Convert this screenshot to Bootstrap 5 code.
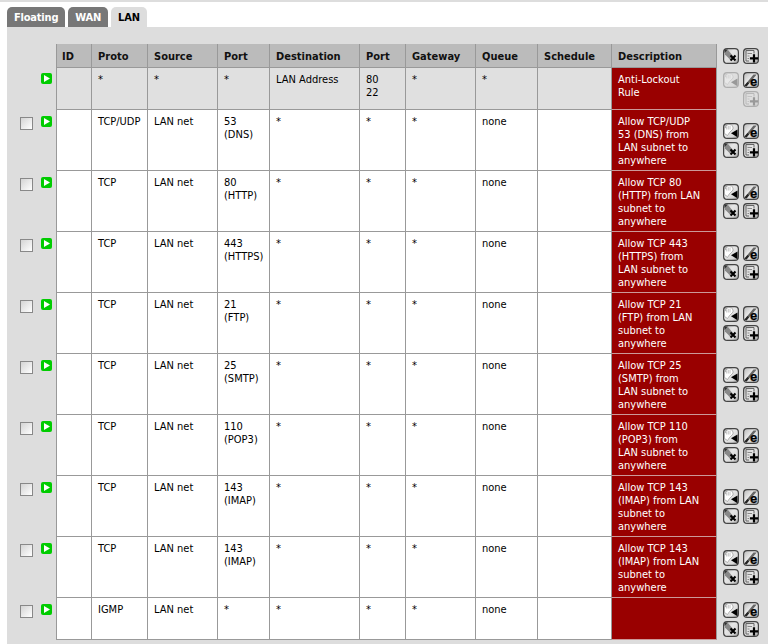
<!DOCTYPE html>
<html lang="en">
<head>
<meta charset="utf-8">
<title>Firewall Rules: LAN</title>
<link rel="stylesheet" href="https://cdn.jsdelivr.net/npm/bootstrap@5.3.0/dist/css/bootstrap.min.css">
<style>
html,body{height:644px;overflow:hidden}
body{background:#fff;border-top:2px solid #ddd;font-family:"DejaVu Sans Condensed","DejaVu Sans",sans-serif;font-size:11px;line-height:13px;color:#000}
.fw-tabs{border:0;padding:5px 0 0 7px;gap:3px;height:25px;--bs-nav-tabs-border-width:0}
.fw-tabs .nav-link{font-weight:700;font-size:11px;line-height:13px;letter-spacing:-.2px;height:20px;padding:4px 7px;border:0;border-radius:5px 5px 0 0;background:#777;color:#fff;margin:0}
.fw-tabs .nav-link.active{background:#ddd;color:#000}
.fw-panel{margin-left:7px;background:#ddd;padding:17px 0 4px;height:617px}
.fw-table{table-layout:fixed;width:761px;margin:0;border-collapse:separate;border-spacing:0;--bs-table-bg:transparent;--bs-table-color:#000}
.fw-table>:not(caption)>*>*{padding:5px 6px 0;border-width:0 1px 1px 0;border-style:solid;border-color:#999;vertical-align:top;box-shadow:none;font-weight:400;background:#fff;color:#000}
.fw-table>thead>tr>th{height:24px;background:#bbb;font-weight:700;padding-top:6px;color:#111}
.fw-table>:not(caption)>*>.id-cell{border-left-width:1px;padding-left:5px}
.fw-table>tbody>tr{height:61px}
.fw-table>tbody>tr.short-row{height:42px}
.fw-table>tbody>tr.locked>td{background:#e0e0e0}
.fw-table>:not(caption)>*>.bare,.fw-table>thead>tr>th.bare,.fw-table>tbody>tr.locked>td.bare{background:transparent;border-width:0;padding:0}
.fw-table>tbody>tr>.descr,.fw-table>tbody>tr.locked>td.descr{background:#900;color:#fff;border-bottom-color:#c99}
.fw-table>tbody>tr>.acts,.fw-table>tbody>tr.locked>td.acts,.fw-table>thead>tr>th.acts{vertical-align:middle;padding:0 0 0 6px}
.fw-table>tbody>tr.short-row>td.acts{padding-top:1px}
.fw-table>tbody>tr>td.cb-cell{padding:7px 0 0 13px}
.cb-box.form-check-input{display:block;width:13px;height:13px;margin:0;border:1px solid #888;border-radius:0;background:linear-gradient(135deg,#d4d4d4,#fff)}
.fw-table>tbody>tr>td.go-cell{padding:6px 0 0 5px}
.fw-table>tbody>tr.locked>td.go-cell{padding:5px 0 0 5px}
.go-ico{display:block;width:11px;height:11px}
.ico-grid{display:grid;grid-template-columns:16px 16px;gap:3px 4px;justify-content:start}
.ico{display:block;width:16px;height:16px}
.ico-off{opacity:.3}
</style>
</head>
<body>
<svg width="0" height="0" class="position-absolute">
<defs>
<linearGradient id="tile" x1="0" y1="0" x2="1" y2="1"><stop offset="0" stop-color="#b8b8b8"/><stop offset=".4" stop-color="#e6e6e6"/><stop offset=".75" stop-color="#d8d8d8"/><stop offset="1" stop-color="#8e8e8e"/></linearGradient>
<symbol id="base" viewBox="0 0 16 16"><rect x=".6" y=".6" width="14.800" height="14.800" rx="3.500" fill="url(#tile)" stroke="#444" stroke-width="1.200"/></symbol>
<symbol id="i-del" viewBox="0 0 16 16"><use href="#base"/><path d="M2 3.500 2 6.500 7 11.500 10 8 5 2z" fill="#888"/><path d="M1.500 1.500h3.500l-3.500 3.500z" fill="#333"/><path d="M7.500 7.500l5 5M12.500 7.500l-5 5" stroke="#000" stroke-width="2.100"/></symbol>
<symbol id="i-add" viewBox="0 0 16 16"><use href="#base"/><path d="M3 2.500h8v3M3 2.500v10.500h3" fill="none" stroke="#666" stroke-width="1"/><path d="M4.500 5.500h4.500M4.500 8h2M4.500 10.500h1.500" stroke="#888"/><path d="M11 6.200v8.300M6.900 10.400h8.200" stroke="#000" stroke-width="2.200"/></symbol>
<symbol id="i-hand" viewBox="0 0 16 16"><use href="#base"/><path d="M1.500 10.500V4.500l1.200.3V2.300l1.200.5V1.500l1.400.5.500-.7 1.300.6 1.400-.2 1.500 2.300v2L6.500 9.500 4.500 12.500z" fill="#fff" stroke="#888" stroke-width=".6"/><path d="M3.700 3.500V6.500M5.300 3v3.500M7 3v3.500" stroke="#aaa" stroke-width=".7"/><path d="M14.500 6.500v7.800L8 10.300z" fill="#000"/></symbol>
<symbol id="i-edit" viewBox="0 0 16 16"><use href="#base"/><path d="M1.500 13.500 10.500 2.500h3.200L3.500 14.500z" fill="#666"/><path d="M1.500 13.500 4.500 10l1.500 1.200-2.500 3.300z" fill="#222"/><text x="6.900" y="14.200" font-family="Liberation Sans,sans-serif" font-size="13" font-weight="700" fill="#000" stroke="#000" stroke-width=".25">e</text></symbol>
<symbol id="i-go" viewBox="0 0 11 11"><rect width="11" height="11" rx="2" fill="#0c0"/><path d="M3 2v7l6-3.500z" fill="#fff"/></symbol>
</defs>
</svg>

<ul class="nav nav-tabs fw-tabs">
  <li class="nav-item"><a class="nav-link" href="#">Floating</a></li>
  <li class="nav-item"><a class="nav-link" href="#">WAN</a></li>
  <li class="nav-item"><a class="nav-link active" href="#">LAN</a></li>
</ul>

<div class="fw-panel">
<table class="table fw-table">
<colgroup><col style="width:29px"><col style="width:20px"><col style="width:36px"><col style="width:56px"><col style="width:70px"><col style="width:52px"><col style="width:90px"><col style="width:46px"><col style="width:70px"><col style="width:62px"><col style="width:74px"><col style="width:105px"><col style="width:51px"></colgroup>
<thead>
<tr><th class="bare"></th><th class="bare"></th><th class="id-cell">ID</th><th>Proto</th><th>Source</th><th>Port</th><th>Destination</th><th>Port</th><th>Gateway</th><th>Queue</th><th>Schedule</th><th>Description</th>
<th class="bare acts"><div class="ico-grid"><svg class="ico"><use href="#i-del"/></svg><svg class="ico"><use href="#i-add"/></svg></div></th></tr>
</thead>
<tbody>
<tr class="locked short-row"><td class="bare"></td><td class="bare go-cell"><svg class="go-ico"><use href="#i-go"/></svg></td><td class="id-cell"></td><td>*</td><td>*</td><td>*</td><td>LAN Address</td><td>80<br>22</td><td>*</td><td>*</td><td></td><td class="descr">Anti-Lockout<br>Rule</td>
<td class="bare acts"><div class="ico-grid"><svg class="ico ico-off"><use href="#i-hand"/></svg><svg class="ico"><use href="#i-edit"/></svg><span></span><svg class="ico ico-off"><use href="#i-add"/></svg></div></td></tr>

<tr><td class="bare cb-cell"><input class="form-check-input cb-box" type="checkbox" aria-label="select"></td><td class="bare go-cell"><svg class="go-ico"><use href="#i-go"/></svg></td><td class="id-cell"></td><td>TCP/UDP</td><td>LAN net</td><td>53<br>(DNS)</td><td>*</td><td>*</td><td>*</td><td>none</td><td></td><td class="descr">Allow TCP/UDP<br>53 (DNS) from<br>LAN subnet to<br>anywhere</td>
<td class="bare acts"><div class="ico-grid"><svg class="ico"><use href="#i-hand"/></svg><svg class="ico"><use href="#i-edit"/></svg><svg class="ico"><use href="#i-del"/></svg><svg class="ico"><use href="#i-add"/></svg></div></td></tr>

<tr><td class="bare cb-cell"><input class="form-check-input cb-box" type="checkbox" aria-label="select"></td><td class="bare go-cell"><svg class="go-ico"><use href="#i-go"/></svg></td><td class="id-cell"></td><td>TCP</td><td>LAN net</td><td>80<br>(HTTP)</td><td>*</td><td>*</td><td>*</td><td>none</td><td></td><td class="descr">Allow TCP 80<br>(HTTP) from LAN<br>subnet to<br>anywhere</td>
<td class="bare acts"><div class="ico-grid"><svg class="ico"><use href="#i-hand"/></svg><svg class="ico"><use href="#i-edit"/></svg><svg class="ico"><use href="#i-del"/></svg><svg class="ico"><use href="#i-add"/></svg></div></td></tr>

<tr><td class="bare cb-cell"><input class="form-check-input cb-box" type="checkbox" aria-label="select"></td><td class="bare go-cell"><svg class="go-ico"><use href="#i-go"/></svg></td><td class="id-cell"></td><td>TCP</td><td>LAN net</td><td>443<br>(HTTPS)</td><td>*</td><td>*</td><td>*</td><td>none</td><td></td><td class="descr">Allow TCP 443<br>(HTTPS) from<br>LAN subnet to<br>anywhere</td>
<td class="bare acts"><div class="ico-grid"><svg class="ico"><use href="#i-hand"/></svg><svg class="ico"><use href="#i-edit"/></svg><svg class="ico"><use href="#i-del"/></svg><svg class="ico"><use href="#i-add"/></svg></div></td></tr>

<tr><td class="bare cb-cell"><input class="form-check-input cb-box" type="checkbox" aria-label="select"></td><td class="bare go-cell"><svg class="go-ico"><use href="#i-go"/></svg></td><td class="id-cell"></td><td>TCP</td><td>LAN net</td><td>21<br>(FTP)</td><td>*</td><td>*</td><td>*</td><td>none</td><td></td><td class="descr">Allow TCP 21<br>(FTP) from LAN<br>subnet to<br>anywhere</td>
<td class="bare acts"><div class="ico-grid"><svg class="ico"><use href="#i-hand"/></svg><svg class="ico"><use href="#i-edit"/></svg><svg class="ico"><use href="#i-del"/></svg><svg class="ico"><use href="#i-add"/></svg></div></td></tr>

<tr><td class="bare cb-cell"><input class="form-check-input cb-box" type="checkbox" aria-label="select"></td><td class="bare go-cell"><svg class="go-ico"><use href="#i-go"/></svg></td><td class="id-cell"></td><td>TCP</td><td>LAN net</td><td>25<br>(SMTP)</td><td>*</td><td>*</td><td>*</td><td>none</td><td></td><td class="descr">Allow TCP 25<br>(SMTP) from<br>LAN subnet to<br>anywhere</td>
<td class="bare acts"><div class="ico-grid"><svg class="ico"><use href="#i-hand"/></svg><svg class="ico"><use href="#i-edit"/></svg><svg class="ico"><use href="#i-del"/></svg><svg class="ico"><use href="#i-add"/></svg></div></td></tr>

<tr><td class="bare cb-cell"><input class="form-check-input cb-box" type="checkbox" aria-label="select"></td><td class="bare go-cell"><svg class="go-ico"><use href="#i-go"/></svg></td><td class="id-cell"></td><td>TCP</td><td>LAN net</td><td>110<br>(POP3)</td><td>*</td><td>*</td><td>*</td><td>none</td><td></td><td class="descr">Allow TCP 110<br>(POP3) from<br>LAN subnet to<br>anywhere</td>
<td class="bare acts"><div class="ico-grid"><svg class="ico"><use href="#i-hand"/></svg><svg class="ico"><use href="#i-edit"/></svg><svg class="ico"><use href="#i-del"/></svg><svg class="ico"><use href="#i-add"/></svg></div></td></tr>

<tr><td class="bare cb-cell"><input class="form-check-input cb-box" type="checkbox" aria-label="select"></td><td class="bare go-cell"><svg class="go-ico"><use href="#i-go"/></svg></td><td class="id-cell"></td><td>TCP</td><td>LAN net</td><td>143<br>(IMAP)</td><td>*</td><td>*</td><td>*</td><td>none</td><td></td><td class="descr">Allow TCP 143<br>(IMAP) from LAN<br>subnet to<br>anywhere</td>
<td class="bare acts"><div class="ico-grid"><svg class="ico"><use href="#i-hand"/></svg><svg class="ico"><use href="#i-edit"/></svg><svg class="ico"><use href="#i-del"/></svg><svg class="ico"><use href="#i-add"/></svg></div></td></tr>

<tr><td class="bare cb-cell"><input class="form-check-input cb-box" type="checkbox" aria-label="select"></td><td class="bare go-cell"><svg class="go-ico"><use href="#i-go"/></svg></td><td class="id-cell"></td><td>TCP</td><td>LAN net</td><td>143<br>(IMAP)</td><td>*</td><td>*</td><td>*</td><td>none</td><td></td><td class="descr">Allow TCP 143<br>(IMAP) from LAN<br>subnet to<br>anywhere</td>
<td class="bare acts"><div class="ico-grid"><svg class="ico"><use href="#i-hand"/></svg><svg class="ico"><use href="#i-edit"/></svg><svg class="ico"><use href="#i-del"/></svg><svg class="ico"><use href="#i-add"/></svg></div></td></tr>

<tr class="short-row"><td class="bare cb-cell"><input class="form-check-input cb-box" type="checkbox" aria-label="select"></td><td class="bare go-cell"><svg class="go-ico"><use href="#i-go"/></svg></td><td class="id-cell"></td><td>IGMP</td><td>LAN net</td><td>*</td><td>*</td><td>*</td><td>*</td><td>none</td><td></td><td class="descr"></td>
<td class="bare acts"><div class="ico-grid"><svg class="ico"><use href="#i-hand"/></svg><svg class="ico"><use href="#i-edit"/></svg><svg class="ico"><use href="#i-del"/></svg><svg class="ico"><use href="#i-add"/></svg></div></td></tr>
</tbody>
</table>
</div>
<script src="https://cdn.jsdelivr.net/npm/bootstrap@5.3.0/dist/js/bootstrap.bundle.min.js"></script>
</body>
</html>
